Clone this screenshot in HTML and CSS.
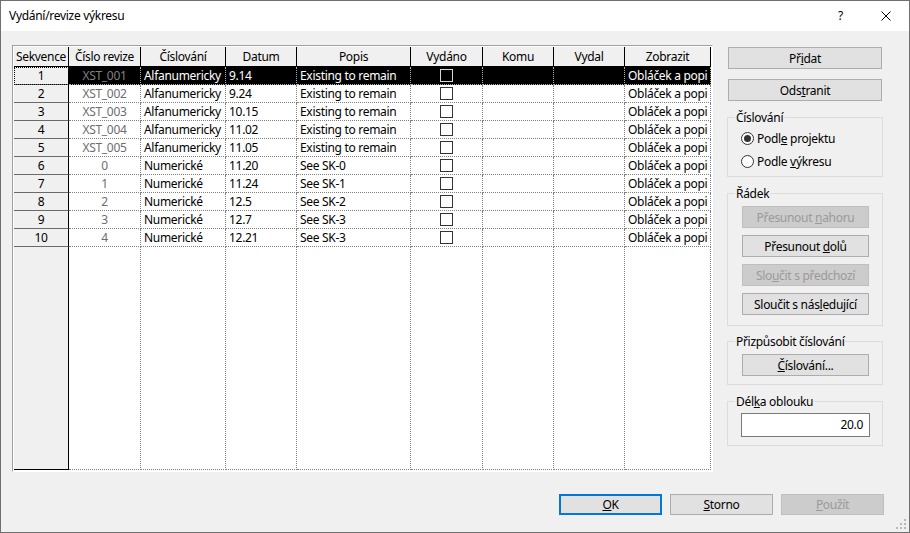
FILE: index.html
```html
<!DOCTYPE html>
<html lang="cs">
<head>
<meta charset="utf-8">
<title>Vydání/revize výkresu</title>
<link rel="stylesheet" href="styles.css">
</head>
<body>
<div class="dialog">
  <div class="titlebar">
    <span class="title">Vydání/revize výkresu</span>
    <span class="help">?</span>
    <span class="close"><svg width="10" height="10" viewBox="0 0 10 10"><path d="M0.5 0.5 L9.5 9.5 M9.5 0.5 L0.5 9.5" stroke="#000" stroke-width="1" fill="none"/></svg></span>
  </div>
  <div class="body">
    <div class="main">
      <div class="gridframe">
        <div class="grid">
          <div class="h">Sekvence</div><div class="h">Číslo revize</div><div class="h">Číslování</div><div class="h">Datum</div><div class="h">Popis</div><div class="h">Vydáno</div><div class="h">Komu</div><div class="h">Vydal</div><div class="h">Zobrazit</div>

          <div class="rh focus">1</div><div class="c sel ro">XST_001</div><div class="c sel">Alfanumericky</div><div class="c sel">9.14</div><div class="c sel">Existing to remain</div><div class="c sel cb"><span class="box"></span></div><div class="c sel"></div><div class="c sel"></div><div class="c sel">Obláček a popi</div>

          <div class="rh">2</div><div class="c ro">XST_002</div><div class="c">Alfanumericky</div><div class="c">9.24</div><div class="c">Existing to remain</div><div class="c cb"><span class="box"></span></div><div class="c"></div><div class="c"></div><div class="c">Obláček a popi</div>

          <div class="rh">3</div><div class="c ro">XST_003</div><div class="c">Alfanumericky</div><div class="c">10.15</div><div class="c">Existing to remain</div><div class="c cb"><span class="box"></span></div><div class="c"></div><div class="c"></div><div class="c">Obláček a popi</div>

          <div class="rh">4</div><div class="c ro">XST_004</div><div class="c">Alfanumericky</div><div class="c">11.02</div><div class="c">Existing to remain</div><div class="c cb"><span class="box"></span></div><div class="c"></div><div class="c"></div><div class="c">Obláček a popi</div>

          <div class="rh">5</div><div class="c ro">XST_005</div><div class="c">Alfanumericky</div><div class="c">11.05</div><div class="c">Existing to remain</div><div class="c cb"><span class="box"></span></div><div class="c"></div><div class="c"></div><div class="c">Obláček a popi</div>

          <div class="rh">6</div><div class="c ro">0</div><div class="c">Numerické</div><div class="c">11.20</div><div class="c">See SK-0</div><div class="c cb"><span class="box"></span></div><div class="c"></div><div class="c"></div><div class="c">Obláček a popi</div>

          <div class="rh">7</div><div class="c ro">1</div><div class="c">Numerické</div><div class="c">11.24</div><div class="c">See SK-1</div><div class="c cb"><span class="box"></span></div><div class="c"></div><div class="c"></div><div class="c">Obláček a popi</div>

          <div class="rh">8</div><div class="c ro">2</div><div class="c">Numerické</div><div class="c">12.5</div><div class="c">See SK-2</div><div class="c cb"><span class="box"></span></div><div class="c"></div><div class="c"></div><div class="c">Obláček a popi</div>

          <div class="rh">9</div><div class="c ro">3</div><div class="c">Numerické</div><div class="c">12.7</div><div class="c">See SK-3</div><div class="c cb"><span class="box"></span></div><div class="c"></div><div class="c"></div><div class="c">Obláček a popi</div>

          <div class="rh">10</div><div class="c ro">4</div><div class="c">Numerické</div><div class="c">12.21</div><div class="c">See SK-3</div><div class="c cb"><span class="box"></span></div><div class="c"></div><div class="c"></div><div class="c">Obláček a popi</div>

          <div class="rh fill"></div><div class="c fill"></div><div class="c fill"></div><div class="c fill"></div><div class="c fill"></div><div class="c fill"></div><div class="c fill"></div><div class="c fill"></div><div class="c fill"></div>
        </div>
      </div>
      <div class="side">
        <div class="btn wide"><span>Př<u>i</u>dat</span></div>
        <div class="btn wide gap10"><span>Ods<u>t</u>ranit</span></div>
        <div class="group g1">
          <span class="legend">Číslování</span>
          <div class="radio-row"><span class="radio on"></span><span>Podl<u>e</u> projektu</span></div>
          <div class="radio-row"><span class="radio"></span><span>Podle <u>v</u>ýkresu</span></div>
        </div>
        <div class="group g2">
          <span class="legend">Řádek</span>
          <div class="btn inner disabled"><span>Přesunout <u>n</u>ahoru</span></div>
          <div class="btn inner"><span>Přesunout <u>d</u>olů</span></div>
          <div class="btn inner disabled"><span>Slo<u>u</u>čit s předchozí</span></div>
          <div class="btn inner"><span>Sloučit s nás<u>l</u>edující</span></div>
        </div>
        <div class="group g3">
          <span class="legend">Přizpůsobit číslování</span>
          <div class="btn inner"><span><u>Č</u>íslování...</span></div>
        </div>
        <div class="group g4">
          <span class="legend">Dél<u>k</u>a oblouku</span>
          <div class="textbox">20.0</div>
        </div>
      </div>
    </div>
    <div class="footer">
      <div class="btn fbtn default"><span><u>O</u>K</span></div>
      <div class="btn fbtn"><span><u>S</u>torno</span></div>
      <div class="btn fbtn disabled"><span><u>P</u>oužít</span></div>
    </div>
    <div class="grip"><svg width="10" height="10" viewBox="0 0 10 10" fill="#b8b8b8"><rect x="8" y="0" width="2" height="2"/><rect x="4" y="4" width="2" height="2"/><rect x="8" y="4" width="2" height="2"/><rect x="0" y="8" width="2" height="2"/><rect x="4" y="8" width="2" height="2"/><rect x="8" y="8" width="2" height="2"/></svg></div>
  </div>
</div>
</body>
</html>
```

FILE: styles.css
```css
* { box-sizing: border-box; }
html, body { margin: 0; padding: 0; }
body {
  font-family: "Noto Sans", "Liberation Sans", sans-serif;
  font-size: 12px;
  letter-spacing: -0.3px;
  color: #000;
  background: #f0f0f0;
}
u { text-decoration: underline; text-underline-offset: 1px; }

.dialog {
  width: 910px;
  height: 533px;
  border: 1px solid #707070;
  display: flex;
  flex-direction: column;
  background: #f0f0f0;
}
.titlebar {
  height: 30px;
  background: #fff;
  display: flex;
  align-items: center;
  padding-left: 8px;
  line-height: 30px;
}
.title { flex: 1; }
.help { width: 6px; margin-right: 37px; }
.close { width: 10px; height: 10px; display: flex; margin-right: 18px; margin-top: -1px; }

.body {
  flex: 1;
  position: relative;
  display: flex;
  flex-direction: column;
}
.main {
  display: flex;
  padding: 14px 0 0 11px;
}
.gridframe {
  border: 1px solid;
  border-color: #a0a0a0 #ffffff #ffffff #a0a0a0;
  padding: 1px;
  background: #fff;
}
.grid {
  display: grid;
  grid-template-columns: 55px 72px 85px 71px 114px 72px 71px 71px 86px;
  grid-template-rows: 20px repeat(10, 18px) 223px;
  width: 697px;
}
.grid > div {
  white-space: nowrap;
  overflow: hidden;
}
.h {
  background: #f0f0f0;
  border-right: 1px solid #000;
  border-bottom: 1px solid #000;
  text-align: center;
  line-height: 19px;
}
.rh {
  background: #f0f0f0;
  border-right: 1px solid #000;
  border-bottom: 1px solid #6a6a6a;
  text-align: center;
  line-height: 17px;
}
.rh.focus { outline: 1px dotted #000; outline-offset: -1px; }
.rh.fill { border-bottom: 1px solid #000; }
.c {
  border-right: 1px dotted #808080;
  border-bottom: 1px dotted #808080;
  padding: 0 3px;
  line-height: 17px;
  background: #fff;
}
.c.ro { color: #6d6d6d; text-align: center; }
.c.sel { background: #000; color: #fff; border-color: #b0b0b0; }
.c.sel.ro { color: #808080; }
.c.cb { display: flex; align-items: center; justify-content: center; }
.box {
  width: 13px;
  height: 13px;
  border: 1px solid #333;
  background: #fff;
}
.sel .box { background: #000; border-color: #d8d8d8; }

.side {
  margin-left: 14px;
  width: 156px;
  padding-top: 2px;
  display: flex;
  flex-direction: column;
}
.btn {
  height: 22px;
  border: 1px solid #adadad;
  background: #e1e1e1;
  display: flex;
  align-items: center;
  justify-content: center;
  white-space: nowrap;
}
.btn.disabled { background: #cccccc; border-color: #bfbfbf; color: #9a9a9a; }
.wide { width: 154px; margin-left: 1px; }
.gap10 { margin-top: 10px; }

.group {
  position: relative;
  border: 1px solid #dcdcdc;
  width: 156px;
}
.legend {
  position: absolute;
  top: -8px;
  left: 7px;
  line-height: 15px;
  padding: 0 1px;
  background: #f0f0f0;
  white-space: nowrap;
}
.g1 { margin-top: 16px; height: 60px; padding: 9px 0 0 13px; }
.radio-row { height: 23px; display: flex; align-items: center; gap: 3px; }
.radio {
  width: 13px;
  height: 13px;
  border: 1px solid #333;
  border-radius: 50%;
  background: #fff;
  display: flex;
  align-items: center;
  justify-content: center;
}
.radio.on::after {
  content: "";
  width: 7px;
  height: 7px;
  border-radius: 50%;
  background: #333;
}
.g2 {
  margin-top: 16px;
  height: 133px;
  padding: 12px 0 0 14px;
  display: flex;
  flex-direction: column;
  gap: 7px;
}
.inner { width: 127px; }
.g3 { margin-top: 15px; height: 44px; padding: 12px 0 0 14px; }
.g4 { margin-top: 16px; height: 45px; padding: 11px 0 0 13px; }
.textbox {
  width: 129px;
  height: 24px;
  border: 1px solid #7a7a7a;
  background: #fff;
  text-align: right;
  padding-right: 6px;
  line-height: 22px;
}

.footer {
  display: flex;
  justify-content: flex-end;
  gap: 8px;
  padding: 22px 25px 0 0;
}
.fbtn { width: 103px; height: 21px; }
.fbtn.default { border: 2px solid #0078d7; }

.grip {
  position: absolute;
  right: 3px;
  bottom: 3px;
  width: 10px;
  height: 10px;
  display: flex;
}
```
